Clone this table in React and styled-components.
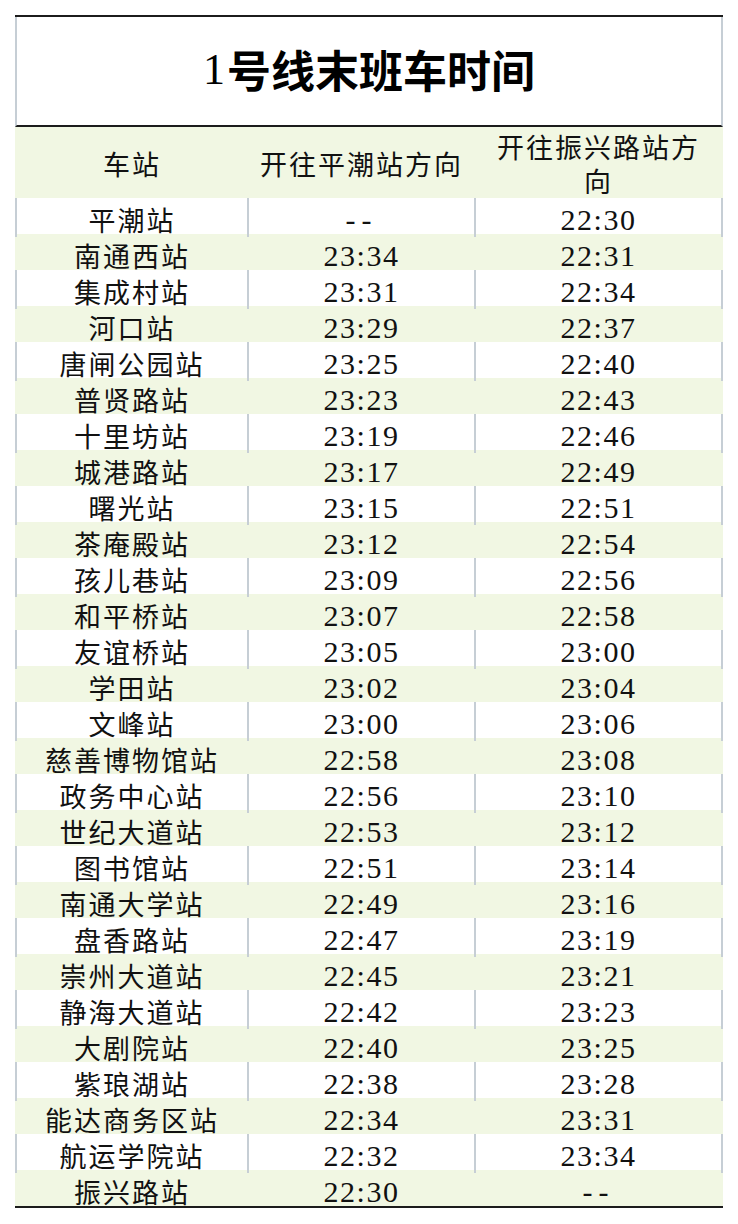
import React from 'react';
import styled, { createGlobalStyle } from 'styled-components';

const rows = [
  ['平潮站', '--', '22:30'],
  ['南通西站', '23:34', '22:31'],
  ['集成村站', '23:31', '22:34'],
  ['河口站', '23:29', '22:37'],
  ['唐闸公园站', '23:25', '22:40'],
  ['普贤路站', '23:23', '22:43'],
  ['十里坊站', '23:19', '22:46'],
  ['城港路站', '23:17', '22:49'],
  ['曙光站', '23:15', '22:51'],
  ['茶庵殿站', '23:12', '22:54'],
  ['孩儿巷站', '23:09', '22:56'],
  ['和平桥站', '23:07', '22:58'],
  ['友谊桥站', '23:05', '23:00'],
  ['学田站', '23:02', '23:04'],
  ['文峰站', '23:00', '23:06'],
  ['慈善博物馆站', '22:58', '23:08'],
  ['政务中心站', '22:56', '23:10'],
  ['世纪大道站', '22:53', '23:12'],
  ['图书馆站', '22:51', '23:14'],
  ['南通大学站', '22:49', '23:16'],
  ['盘香路站', '22:47', '23:19'],
  ['崇州大道站', '22:45', '23:21'],
  ['静海大道站', '22:42', '23:23'],
  ['大剧院站', '22:40', '23:25'],
  ['紫琅湖站', '22:38', '23:28'],
  ['能达商务区站', '22:34', '23:31'],
  ['航运学院站', '22:32', '23:34'],
  ['振兴路站', '22:30', '--'],
];

const green = '#f1f7e3';
const divider = '#c6ced5';

const GlobalStyle = createGlobalStyle`
  body {
    margin: 0;
    background: #fff;
    font-family: "Noto Sans CJK SC", sans-serif;
  }
`;

const Sheet = styled.div`
  width: 708px;
  margin: 15px 0 0 15px;
  border-top: 2px solid #1c1c1c;
  border-bottom: 2px solid #1c1c1c;
`;

const Title = styled.div`
  height: 110px;
  display: flex;
  align-items: center;
  justify-content: center;
  border-left: 2px solid ${divider};
  border-right: 2px solid ${divider};
  border-bottom: 2px solid #1c1c1c;
  font-family: "Liberation Serif", "Noto Sans CJK SC", serif;
  font-weight: 700;
  font-size: 44px;
  color: #000;
  padding-bottom: 4px;
  box-sizing: border-box;
`;

const LineNo = styled.span`
  font-weight: 400;
  margin-right: 2px;
`;

const Row = styled.div`
  display: grid;
  grid-template-columns: 232px 227px 249px;
  height: ${(p) => (p.$head ? 71 : 36)}px;
  background: ${(p) => (p.$shade ? green : '#fff')};
`;

const Cell = styled.div`
  display: flex;
  align-items: center;
  justify-content: center;
  text-align: center;
  box-sizing: border-box;
  border-left: 2px solid ${(p) => (p.$lines ? divider : 'transparent')};
  &:last-child {
    border-right: 2px solid ${(p) => (p.$lines ? divider : 'transparent')};
  }
  font-family: ${(p) =>
    p.$num ? '"Liberation Serif", serif' : '"Noto Sans CJK SC", sans-serif'};
  font-size: ${(p) => (p.$num ? 30 : 27)}px;
  letter-spacing: ${(p) => (p.$num ? (p.$dash ? 6 : 1.5) : 2)}px;
  line-height: 34px;
  color: #111;
  padding-top: ${(p) => (p.$head ? 2 : 5)}px;
`;

const HeadText = styled.span`
  display: block;
  max-width: ${(p) => p.$max || 240}px;
`;

export default function App() {
  return (
    <>
      <GlobalStyle />
      <Sheet>
        <Title>
          <LineNo>1</LineNo>号线末班车时间
        </Title>
        <Row $head $shade>
          <Cell $head>车站</Cell>
          <Cell $head>开往平潮站方向</Cell>
          <Cell $head>
            <HeadText $max={216}>开往振兴路站方向</HeadText>
          </Cell>
        </Row>
        {rows.map(([name, a, b], i) => {
          const shade = i % 2 === 1;
          return (
            <Row key={name} $shade={shade}>
              <Cell $lines={!shade}>{name}</Cell>
              <Cell $lines={!shade} $num $dash={a === '--'}>{a}</Cell>
              <Cell $lines={!shade} $num $dash={b === '--'}>{b}</Cell>
            </Row>
          );
        })}
      </Sheet>
    </>
  );
}
